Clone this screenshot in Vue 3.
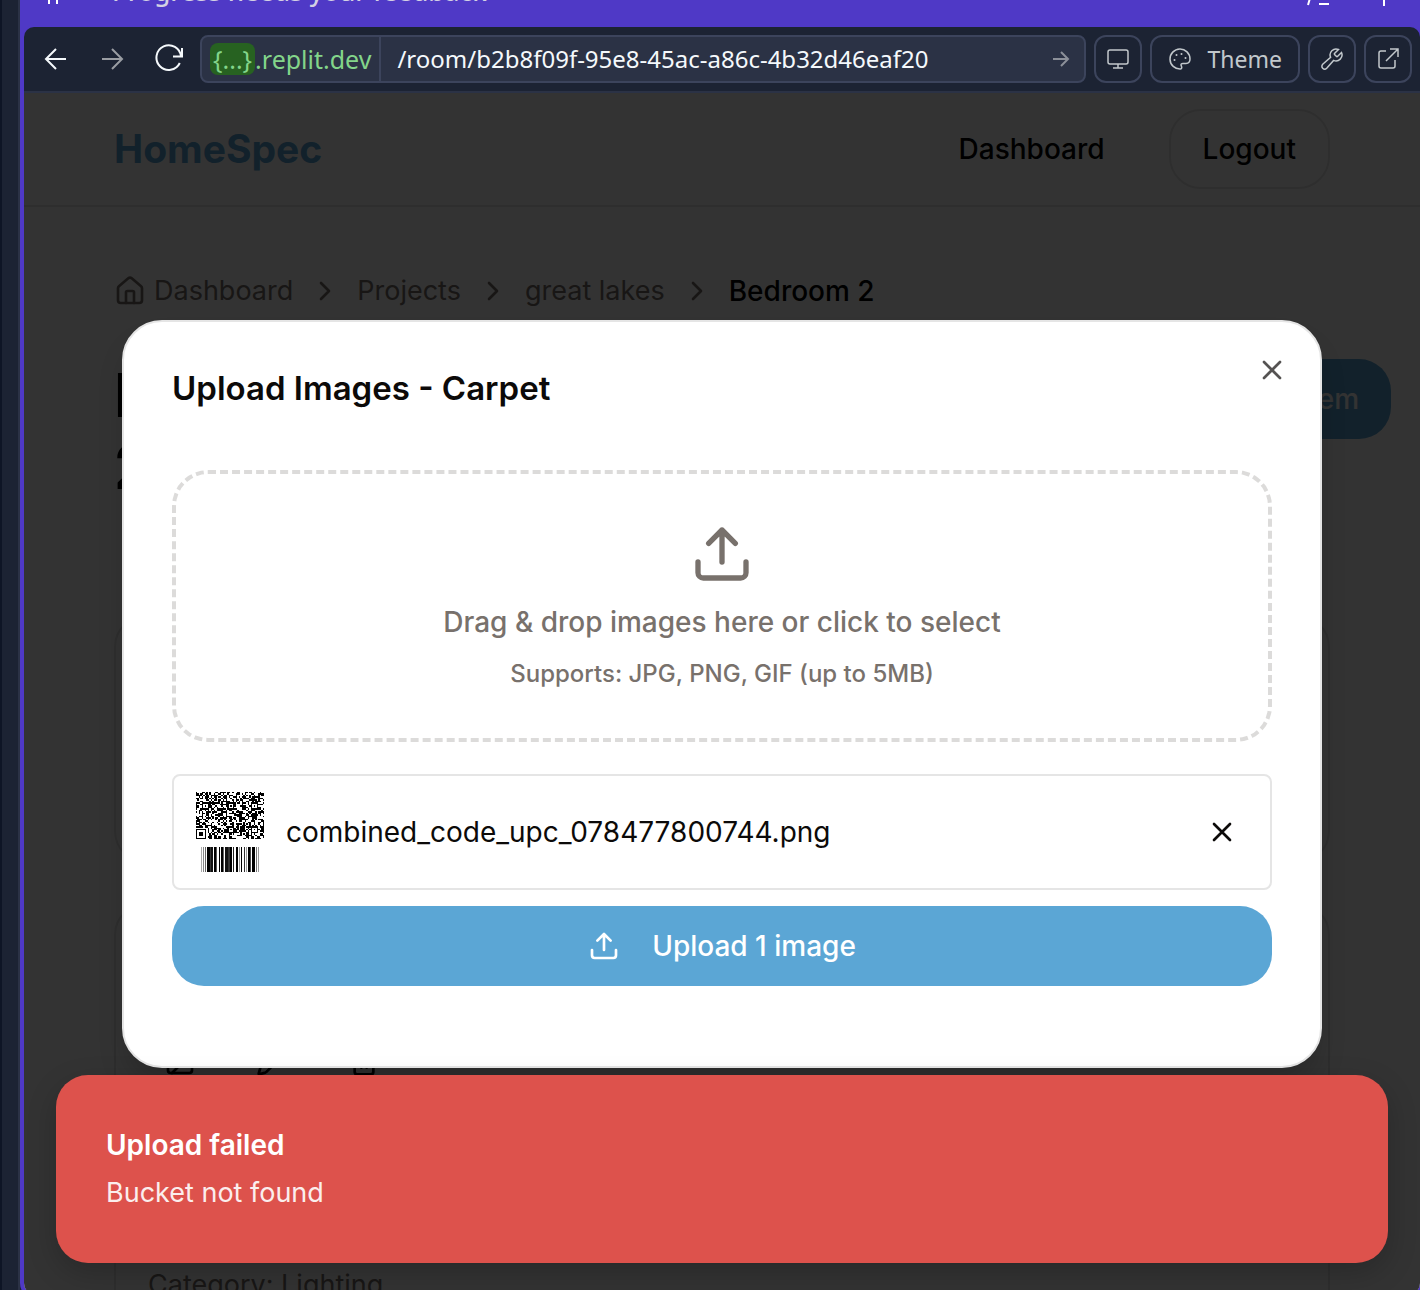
<script setup>
import { ref } from 'vue'

const path = ref('/room/b2b8f09f-95e8-45ac-a86c-4b32d46eaf20')

const crumbs = ['Projects', 'great lakes']

const COLS = 46
const ROWS = 32
const finders = [[6, 9], [23, 9], [39, 9], [23, 25], [39, 25]]

function isDark(x, y) {
  if (x < 8 && y > 23) {
    if (x === 7 || y === 24) return false
    const d = Math.max(Math.abs(x - 3), Math.abs(y - 28))
    return d !== 2
  }
  for (const [fx, fy] of finders) {
    const d = Math.max(Math.abs(x - fx), Math.abs(y - fy))
    if (d <= 2) return d !== 1
  }
  let h = (x * 374761393 + y * 668265263) | 0
  h = Math.imul(h ^ (h >>> 13), 1274126177)
  h ^= h >>> 16
  return (h & 255) < 138
}

const modules = []
for (let y = 0; y < ROWS; y++) {
  for (let x = 0; x < COLS; x++) {
    if (isDark(x, y)) modules.push({ x, y })
  }
}

const bars = [
  [11, 1, '#aaa'], [13, 1, '#888'], [15, 1, '#666'], [17, 3, '#000'], [20, 1, '#333'], [21, 2, '#111'],
  [24, 2, '#000'], [26, 1, '#555'], [29, 1, '#000'], [31, 2, '#000'], [33, 1, '#666'], [35, 3, '#111'],
  [38, 2, '#333'], [40, 2, '#000'], [43, 1, '#222'], [46, 2, '#000'], [49, 1, '#999'], [51, 1, '#000'],
  [54, 1, '#333'], [56, 1, '#999'], [58, 2, '#000'], [60, 1, '#444'], [62, 3, '#000'], [66, 1, '#777'], [68, 1, '#999']
]
</script>

<template>
  <div class="workspace">
    <div class="rail"></div>
    <div class="frame">
      <div class="banner">
        <svg class="banner-mark" width="20" height="20" viewBox="0 0 20 20"><path d="M5 2v16M13 2v16M1 7h17M1 13h17" /></svg>
        <span class="banner-text">Progress needs your feedback</span>
        <span class="banner-tools">
          <svg width="30" height="22" viewBox="0 0 30 22"><path d="M7 4L2 21M13 20h10" /></svg>
          <svg width="30" height="22" viewBox="0 0 30 22"><path d="M14 2v20" /></svg>
        </span>
      </div>

      <div class="toolbar">
        <button class="nav" aria-label="Back">
          <svg width="24" height="24" viewBox="0 0 24 24"><path d="M22 12H2M12 2L2 12l10 10" /></svg>
        </button>
        <button class="nav muted" aria-label="Forward">
          <svg width="24" height="24" viewBox="0 0 24 24"><path d="M2 12h20M12 2l10 10-10 10" /></svg>
        </button>
        <button class="nav" aria-label="Reload">
          <svg width="32" height="32" viewBox="0 0 32 32"><path d="M30 5v8.500h-9M29 13.500A12.300 12.300 0 1 0 27.800 20" /></svg>
        </button>
        <div class="address">
          <span class="host"><span class="token">{...}</span>.replit.dev</span>
          <input v-model="path" class="path" aria-label="Path" />
          <svg class="go" width="18" height="18" viewBox="0 0 18 18"><path d="M1 9h15M9 2l7 7-7 7" /></svg>
        </div>
        <button class="tool" aria-label="Device size">
          <svg width="24" height="24" viewBox="0 0 24 24"><rect x="2" y="3" width="20" height="14" rx="2" /><path d="M12 17v4M7 21h10" /></svg>
        </button>
        <button class="tool theme">
          <svg width="24" height="24" viewBox="0 0 24 24">
            <path d="M12.500 22A10 10 0 1 1 22 12c0 3-1.600 4.400-4 4.400h-3c-1.500 0-2.500.8-1.800 2.300.8 1.500.8 3.300-.7 3.300z" />
            <g class="dots"><circle cx="8.500" cy="8" r="1" /><circle cx="13.500" cy="7" r="1" /><circle cx="17.500" cy="11" r="1" /><circle cx="6.500" cy="13" r="1" /></g>
          </svg>
          Theme
        </button>
        <button class="tool" aria-label="Developer tools">
          <svg width="24" height="24" viewBox="0 0 24 24"><path d="M14.700 6.300a1 1 0 0 0 0 1.400l1.600 1.600a1 1 0 0 0 1.400 0l3.800-3.800a6 6 0 0 1-7.900 7.900l-6.900 7.900a2.600 2.600 0 0 1-4-4l7.900-6.900a6 6 0 0 1 7.900-7.900z" /><path d="M5 19.500v.1" /></svg>
        </button>
        <button class="tool" aria-label="Open in new tab">
          <svg width="24" height="24" viewBox="0 0 24 24"><path d="M10 4H5a2 2 0 0 0-2 2v13a2 2 0 0 0 2 2h12a2 2 0 0 0 2-2v-6M14 2h8v8M22 2L10 14" /></svg>
        </button>
      </div>

      <div class="viewport">
        <div class="page">
          <header class="site-header">
            <a href="#" class="brand">HomeSpec</a>
            <nav class="site-nav">
              <a href="#" class="nav-link">Dashboard</a>
              <button class="logout">Logout</button>
            </nav>
          </header>
          <main class="content">
            <nav class="breadcrumb" aria-label="Breadcrumb">
              <a href="#" class="home">
                <svg class="icon" width="32" height="32" viewBox="0 0 24 24"><path d="M15 21v-8a1 1 0 0 0-1-1h-4a1 1 0 0 0-1 1v8" /><path d="M3 10a2 2 0 0 1 .7-1.500l7-6a2 2 0 0 1 2.600 0l7 6A2 2 0 0 1 21 10v9a2 2 0 0 1-2 2H5a2 2 0 0 1-2-2z" /></svg>
                Dashboard
              </a>
              <template v-for="crumb in crumbs" :key="crumb">
                <svg class="icon" width="32" height="32" viewBox="0 0 24 24"><path d="M9 18l6-6-6-6" /></svg>
                <a href="#">{{ crumb }}</a>
              </template>
              <svg class="icon" width="32" height="32" viewBox="0 0 24 24"><path d="M9 18l6-6-6-6" /></svg>
              <span class="current">Bedroom 2</span>
            </nav>
            <div class="room-head">
              <h1>Bedroom<br />2</h1>
              <button class="add">Add Item</button>
            </div>
            <section class="card short"></section>
            <section class="card tools">
              <svg class="icon" width="32" height="32" viewBox="0 0 24 24"><rect x="3" y="3" width="18" height="18" rx="2" /><circle cx="9" cy="9" r="2" /><path d="M21 15l-3.100-3.100a2 2 0 0 0-2.800 0L6 21" /></svg>
              <svg class="icon" width="32" height="32" viewBox="0 0 24 24"><path d="M21.200 6.800a2.800 2.800 0 0 0-4-4L3.800 16.200a2 2 0 0 0-.5.800L2 21.400a.5.500 0 0 0 .6.600L7 20.700a2 2 0 0 0 .8-.5z" /></svg>
              <svg class="icon" width="32" height="32" viewBox="0 0 24 24"><path d="M3 6h18M19 6v14a2 2 0 0 1-2 2H7a2 2 0 0 1-2-2V6M8 6V4a2 2 0 0 1 2-2h4a2 2 0 0 1 2 2v2M10 11v6M14 11v6" /></svg>
            </section>
            <section class="card detail">
              <p>Category: Lighting</p>
            </section>
          </main>
        </div>

        <div class="overlay">
          <div class="dialog" role="dialog" aria-labelledby="dialog-title">
            <h2 id="dialog-title">Upload Images - Carpet</h2>
            <button class="close" aria-label="Close">
              <svg class="icon" width="32" height="32" viewBox="0 0 24 24"><path d="M18 6L6 18M6 6l12 12" /></svg>
            </button>
            <div class="dropzone">
              <svg class="icon" width="64" height="64" viewBox="0 0 24 24"><path d="M21 15v4a2 2 0 0 1-2 2H5a2 2 0 0 1-2-2v-4M17 8l-5-5-5 5M12 3v12" /></svg>
              <p class="lead">Drag &amp; drop images here or click to select</p>
              <p class="hint">Supports: JPG, PNG, GIF (up to 5MB)</p>
            </div>
            <div class="file">
              <svg class="thumb" width="80" height="80" viewBox="0 0 80 80" shape-rendering="crispEdges">
                <g transform="translate(6 0) scale(1.480)">
                  <rect v-for="m in modules" :key="m.x + '-' + m.y" :x="m.x" :y="m.y" width="1" height="1" />
                </g>
                <rect v-for="b in bars" :key="b[0]" :x="b[0]" y="55" :width="b[1]" height="25" :fill="b[2]" />
              </svg>
              <span class="name">combined_code_upc_078477800744.png</span>
              <button class="remove" aria-label="Remove file">
                <svg class="icon" width="32" height="32" viewBox="0 0 24 24"><path d="M18 6L6 18M6 6l12 12" /></svg>
              </button>
            </div>
            <button class="submit">
              <svg class="icon" width="32" height="32" viewBox="0 0 24 24"><path d="M21 15v4a2 2 0 0 1-2 2H5a2 2 0 0 1-2-2v-4M17 8l-5-5-5 5M12 3v12" /></svg>
              Upload 1 image
            </button>
          </div>
        </div>

        <div class="toast" role="alert">
          <strong>Upload failed</strong>
          <p>Bucket not found</p>
        </div>
      </div>
    </div>
  </div>
</template>

<style>
body {
  background: #1c2333;
  overflow: hidden;
}
</style>

<style scoped>
* {
  box-sizing: border-box;
}
h1, h2, p {
  margin: 0;
}
button {
  font: inherit;
  color: inherit;
  background: none;
  border: 0;
  padding: 0;
}
a {
  color: inherit;
  text-decoration: none;
}
svg {
  flex: none;
  fill: none;
  stroke: currentColor;
  stroke-width: 2;
}
.icon {
  stroke-linecap: round;
  stroke-linejoin: round;
}
.workspace {
  display: flex;
  height: 100vh;
  overflow: hidden;
  background: #1c2333;
  font: 28px/40px Inter, "Liberation Sans", sans-serif;
}
.rail {
  width: 20px;
  flex: none;
  border-left: 2px solid #0e1525;
  border-right: 2px solid #2b3245;
}
.frame {
  flex: 1;
  min-width: 0;
  display: flex;
  flex-direction: column;
  margin: 0 -4px -9px 0;
  padding: 0 4px 4px;
  border-radius: 0 0 16px 16px;
  background: #4f39c6;
}

/* banner */
.banner {
  height: 27px;
  flex: none;
  display: flex;
  align-items: flex-end;
  padding: 0 20px 21px;
  gap: 48px;
  color: #fff;
}
.banner-text {
  flex: 1;
  color: #d3d0e4;
  font: 500 26px/30px "Noto Sans", "Open Sans", sans-serif;
}
.banner-tools {
  display: flex;
  gap: 34px;
}

/* browser bar */
.toolbar {
  flex: none;
  display: flex;
  align-items: center;
  gap: 8px;
  padding: 8px;
  border-bottom: 2px solid #2b3245;
  border-radius: 10px 10px 0 0;
  background: #1c2333;
  color: #f5f9fc;
  font: 24px/32px "Noto Sans", "Open Sans", sans-serif;
}
.nav {
  width: 48px;
  height: 48px;
  display: flex;
  align-items: center;
  justify-content: center;
}
.muted {
  color: #9a9da3;
}
.address {
  flex: 1;
  min-width: 0;
  display: flex;
  align-items: stretch;
  height: 48px;
  border: 2px solid #3c445c;
  border-radius: 8px;
  background: #2b3245;
}
.host {
  display: flex;
  align-items: center;
  padding: 0 8px;
  border-right: 2px solid #3c445c;
  color: #83d58a;
  font-size: 25px;
}
.token {
  padding: 0 3px;
  border-radius: 8px;
  background: #276221;
}
.path {
  flex: 1;
  min-width: 0;
  padding: 0 16px;
  border: 0;
  background: none;
  color: inherit;
  font: inherit;
}
.go {
  align-self: center;
  margin-right: 14px;
  color: #8c9099;
}
.tool {
  height: 48px;
  min-width: 48px;
  display: flex;
  align-items: center;
  justify-content: center;
  border: 2px solid #3c445c;
  border-radius: 12px;
  color: #c2c8cc;
}
.tool svg {
  stroke-width: 1.5;
}
.theme {
  padding: 0 16px;
  gap: 16px;
  font-size: 23px;
}
.dots {
  fill: currentColor;
  stroke: none;
}

/* site */
.viewport {
  flex: 1;
  min-height: 0;
  position: relative;
  overflow: hidden;
  border-radius: 0 0 12px 12px;
  background: #fff;
}
.page {
  height: 100%;
  overflow: hidden;
}
.site-header {
  display: flex;
  align-items: center;
  justify-content: space-between;
  padding: 16px 90px;
  border-bottom: 2px solid #e5e5e5;
}
.brand {
  color: #5ba6d5;
  font-size: 39px;
  font-weight: 700;
}
.site-nav {
  display: flex;
  align-items: center;
  gap: 64px;
  font-weight: 500;
}
.logout {
  height: 80px;
  padding: 0 32px;
  border: 2px solid #e5e5e5;
  border-radius: 32px;
}
.content {
  padding: 64px 90px 0;
}
.breadcrumb {
  display: flex;
  align-items: center;
  gap: 16px;
  color: #78716c;
  font-size: 27px;
}
.home {
  display: flex;
  align-items: center;
  gap: 8px;
}
.current {
  color: #000;
  font-size: 28px;
  font-weight: 500;
}
.room-head {
  display: flex;
  align-items: flex-start;
  justify-content: space-between;
  margin: 48px -61px 112px 0;
}
h1 {
  font-size: 60px;
  line-height: 72px;
}
.add {
  height: 80px;
  padding: 0 32px;
  border-radius: 32px;
  background: #5ba6d5;
  color: #fff;
  font-weight: 500;
}
.card {
  margin-bottom: 40px;
  border: 2px solid #e5e5e5;
  border-radius: 32px;
}
.short {
  height: 248px;
}
.tools {
  display: flex;
  align-items: flex-end;
  height: 206px;
  padding: 0 48px 30px;
  gap: 60px;
}
.detail {
  height: 300px;
  padding: 114px 32px 0;
  color: #78716c;
  font-size: 27px;
}

/* dialog */
.overlay {
  position: absolute;
  inset: 0;
  display: flex;
  align-items: center;
  justify-content: center;
  background: rgba(0, 0, 0, 0.8);
}
.dialog {
  position: relative;
  width: 86%;
  max-width: 1200px;
  padding: 48px 48px 80px;
  border: 2px solid #e5e5e5;
  border-radius: 40px;
  background: #fff;
  box-shadow: 0 20px 30px -6px rgba(0, 0, 0, 0.2);
  color: #0c0a09;
}
h2 {
  margin-bottom: 64px;
  font-size: 33px;
  line-height: 36px;
  font-weight: 600;
}
.close {
  position: absolute;
  top: 32px;
  right: 32px;
  width: 32px;
  height: 32px;
  color: #555352;
}
.close svg {
  display: block;
}
.dropzone {
  display: flex;
  flex-direction: column;
  align-items: center;
  gap: 16px;
  padding: 48px;
  margin-bottom: 32px;
  border: 4px dashed #dcdbda;
  border-radius: 36px;
  color: #78716c;
  font-weight: 500;
}
.hint {
  font-size: 24px;
  line-height: 32px;
}
.file {
  display: flex;
  align-items: center;
  gap: 16px;
  padding: 16px;
  margin-bottom: 16px;
  border: 2px solid #e5e5e5;
  border-radius: 8px;
}
.thumb {
  fill: #000;
  stroke: none;
}
.name {
  flex: 1;
}
.remove {
  width: 64px;
  height: 64px;
  display: flex;
  align-items: center;
  justify-content: center;
}
.submit {
  width: 100%;
  height: 80px;
  display: flex;
  align-items: center;
  justify-content: center;
  gap: 32px;
  border-radius: 32px;
  background: #5ba6d5;
  color: #fff;
  font-weight: 500;
}

/* toast */
.toast {
  position: absolute;
  left: 32px;
  right: 32px;
  bottom: 32px;
  padding: 50px;
  border-radius: 32px;
  background: #dd524c;
  box-shadow: 0 10px 30px rgba(0, 0, 0, 0.2);
  color: #fff;
}
.toast strong {
  display: block;
  margin-bottom: 8px;
  font-weight: 600;
}
.toast p {
  font-size: 27px;
  opacity: 0.9;
}
</style>
